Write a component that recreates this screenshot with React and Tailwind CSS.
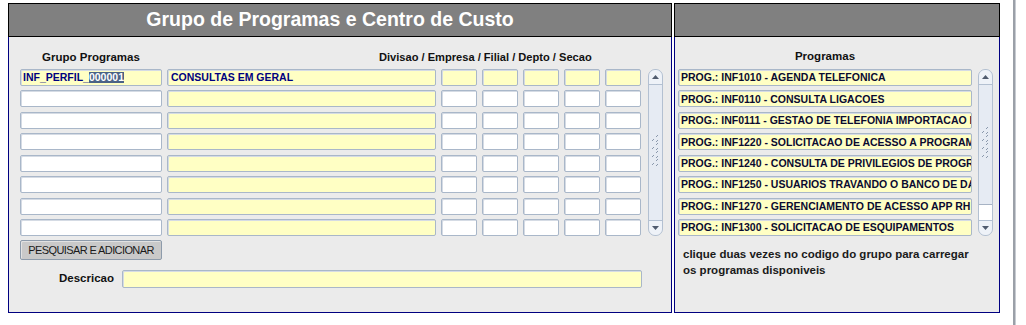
import React from "react";

const FONT = { fontFamily: '"Liberation Sans", Arial, sans-serif' };

function Input({ w, yellow, children, className = "" }) {
  return (
    <div
      className={`h-[17px] shrink-0 rounded-[2px] border border-[#a9b7c9] shadow-[inset_1px_1px_0_#d5dbe4] flex items-center pl-[2px] overflow-hidden whitespace-nowrap text-[10.5px] font-bold leading-none ${
        yellow ? "bg-[#ffffc4]" : "bg-white"
      } ${className}`}
      style={{ width: w }}
    >
      {children}
    </div>
  );
}

function Tri({ up }) {
  return (
    <svg width="7" height="4" viewBox="0 0 7 4">
      {up ? (
        <polygon points="0,4 7,4 3.5,0" fill="#4f5b6e" />
      ) : (
        <polygon points="0,0 7,0 3.5,4" fill="#4f5b6e" />
      )}
    </svg>
  );
}

function Grip() {
  return (
    <svg width="9" height="36" viewBox="0 0 9 36">
      {[0, 8, 16, 24].map((y) => (
        <g key={y} fill="#8a98ac">
          <rect x="6" y={y} width="1" height="1" />
          <rect x="5" y={y + 1} width="1" height="1" />
          <rect x="2" y={y + 4} width="1" height="1" />
          <rect x="1" y={y + 5} width="1" height="1" />
          <rect x="6" y={y + 5} width="1" height="1" />
          <rect x="5" y={y + 6} width="1" height="1" />
        </g>
      ))}
    </svg>
  );
}

function Scrollbar({ thumbFull }) {
  return (
    <div className="w-[15px] h-[167px] shrink-0 flex flex-col rounded-[7px] border border-[#b3c0d1] bg-[#e8edf5] overflow-hidden">
      <div className="h-[15px] shrink-0 flex items-center justify-center border-b border-[#b3c0d1] rounded-t-[7px] bg-[#eef2f8]">
        <Tri up />
      </div>
      {thumbFull ? (
        <div className="flex-1 flex items-center justify-center bg-[#e6ebf3]">
          <Grip />
        </div>
      ) : (
        <>
          <div className="h-[120px] shrink-0 flex items-center justify-center bg-[#e6ebf3] border-b border-[#a7b3c4]">
            <Grip />
          </div>
          <div className="flex-1 bg-white" />
        </>
      )}
      <div className="h-[15px] shrink-0 flex items-center justify-center border-t border-[#b3c0d1] rounded-b-[7px] bg-[#eef2f8]">
        <Tri />
      </div>
    </div>
  );
}

const programs = [
  "PROG.: INF1010 - AGENDA TELEFONICA",
  "PROG.: INF0110 - CONSULTA LIGACOES",
  "PROG.: INF0111 - GESTAO DE TELEFONIA IMPORTACAO DE",
  "PROG.: INF1220 - SOLICITACAO DE ACESSO A PROGRAMAS",
  "PROG.: INF1240 - CONSULTA DE PRIVILEGIOS DE PROGRAMAS",
  "PROG.: INF1250 - USUARIOS TRAVANDO O BANCO DE DADOS",
  "PROG.: INF1270 - GERENCIAMENTO DE ACESSO APP RH",
  "PROG.: INF1300 - SOLICITACAO DE ESQUIPAMENTOS",
];

function Header({ title }) {
  return (
    <div className="h-[34px] border border-black bg-[#808080] flex items-center justify-center pr-[20px]">
      {title && (
        <span className="text-white font-bold text-[19.5px] leading-none">{title}</span>
      )}
    </div>
  );
}

export default function App() {
  const rows = Array.from({ length: 8 });
  return (
    <div className="w-[1026px] h-[325px] bg-white flex overflow-hidden" style={FONT}>
      <div className="flex gap-[2px] pt-[3px] pl-[8px]">
        {/* Left panel */}
        <div className="w-[664px] flex flex-col">
          <Header title="Grupo de Programas e Centro de Custo" />
          <div className="h-[276px] border-x border-b border-[#000080] bg-[#ebebeb] pl-[11px] pt-[14px] flex flex-col">
            <div className="flex items-center h-[13px] text-[11.5px] font-bold text-[#111] leading-none whitespace-nowrap">
              <div className="w-[142px] text-center">Grupo Programas</div>
              <div className="ml-[217px] text-[11.1px]">Divisao / Empresa / Filial / Depto / Secao</div>
            </div>
            <div className="flex mt-[5px]">
              <div className="flex flex-col gap-[4.43px]">
                {rows.map((_, i) => (
                  <div key={i} className="flex gap-[5px]">
                    <Input w={142} yellow={i === 0} className="text-[#000080]">
                      {i === 0 && (
                        <>
                          <span>INF_PERFIL_</span>
                          <span className="bg-[#4a6286] text-white">000001</span>
                        </>
                      )}
                    </Input>
                    <Input w={269} yellow className="text-[#000080] pl-[3px]">
                      {i === 0 ? "CONSULTAS EM GERAL" : ""}
                    </Input>
                    {[0, 1, 2, 3, 4].map((j) => (
                      <Input key={j} w={36} yellow={i === 0} />
                    ))}
                  </div>
                ))}
              </div>
              <div className="ml-[7px]">
                <Scrollbar thumbFull />
              </div>
            </div>
            <div className="mt-[4px]">
              <div className="w-[142px] h-[20px] rounded-[2px] border border-[#8d9bab] bg-[#c9c9c9] shadow-[inset_1px_1px_0_#e2e2e2] flex items-center justify-center text-[11px] tracking-[-0.6px] text-[#1a1a1a] leading-none whitespace-nowrap">
                PESQUISAR E ADICIONAR
              </div>
            </div>
            <div className="flex items-center mt-[10px]">
              <div className="w-[102px] pr-[8px] text-right text-[11.5px] font-bold text-[#111] leading-none">
                Descricao
              </div>
              <div className="w-[520px] h-[18px] rounded-[2px] border border-[#a9b7c9] bg-[#ffffc4] shadow-[inset_1px_1px_0_#d5dbe4]" />
            </div>
          </div>
        </div>
        {/* Right panel */}
        <div className="w-[326px] flex flex-col">
          <Header />
          <div className="h-[276px] border-x border-b border-[#000080] bg-[#ebebeb] pl-[3px] pt-[14px] flex flex-col">
            <div className="w-[294px] h-[13px] text-center text-[11.5px] font-bold text-[#111] leading-none">
              Programas
            </div>
            <div className="flex mt-[5px] gap-[6px]">
              <div className="flex flex-col gap-[4.43px]">
                {programs.map((p) => (
                  <Input key={p} w={294} yellow className="text-[#0a0a30]">
                    {p}
                  </Input>
                ))}
              </div>
              <Scrollbar />
            </div>
            <div className="mt-[10px] pl-[5px] text-[11.5px] font-bold text-[#1a1a1a] leading-[16px]">
              clique duas vezes no codigo do grupo para carregar
              <br />
              os programas disponiveis
            </div>
          </div>
        </div>
      </div>
      <div className="ml-[13px] w-[3px] h-full bg-[#9ba0a8] border-r border-[#c8ccd2]" />
    </div>
  );
}
